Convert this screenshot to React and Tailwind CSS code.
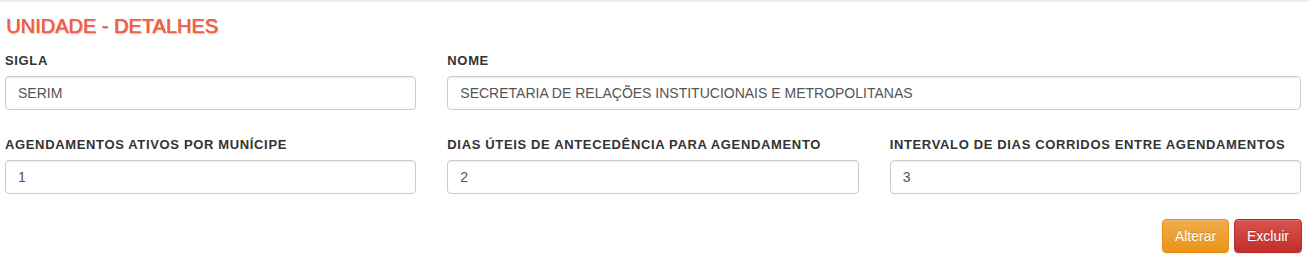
const campos = [
  { label: "SIGLA", value: "SERIM", span: "" },
  { label: "NOME", value: "SECRETARIA DE RELAÇÕES INSTITUCIONAIS E METROPOLITANAS", span: "col-span-2" },
  { label: "AGENDAMENTOS ATIVOS POR MUNÍCIPE", value: "1", span: "" },
  { label: "DIAS ÚTEIS DE ANTECEDÊNCIA PARA AGENDAMENTO", value: "2", span: "" },
  { label: "INTERVALO DE DIAS CORRIDOS ENTRE AGENDAMENTOS", value: "3", span: "" },
];

const Campo = ({ label, value, span }) => (
  <div className={span}>
    <label className="block text-[13px] font-bold leading-[17px] tracking-[0.65px] text-[#333] mb-[7px] whitespace-nowrap">
      {label}
    </label>
    <input
      readOnly
      value={value}
      className="block w-full h-[34px] px-3 text-[14px] text-[#555] bg-white border border-[#ccc] rounded-[4px] shadow-[inset_0_1px_1px_rgba(0,0,0,0.075)] outline-none"
    />
  </div>
);

const App = () => {
  return (
    <div className="w-[1309px] h-[269px] bg-white border-t-2 border-[#ececec] font-['Liberation_Sans',Arial,sans-serif]">
      <h3 className="mt-[13px] pl-[6px] text-[20px] leading-[22px] text-[#f0604a] [text-shadow:0.6px_0.4px_0_#ec5a42,1px_1px_1px_rgba(120,30,10,0.3)]">
        UNIDADE - DETALHES
      </h3>

      <div className="mt-[15px] pl-[5px] pr-[8px] grid grid-cols-3 gap-x-[31px] gap-y-[26px]">
        {campos.map((campo, i) => (
          <Campo key={i} {...campo} />
        ))}
      </div>

      <div className="mt-[25px] pr-[7px] flex justify-end gap-[5px]">
        <button className="h-[34px] w-[67px] text-[14px] text-white rounded-[4px] border border-[#e38d13] bg-[linear-gradient(#f0ad4e,#eb9316)] [text-shadow:0_-1px_0_rgba(0,0,0,0.2)] shadow-[inset_0_1px_0_rgba(255,255,255,0.15),0_1px_1px_rgba(0,0,0,0.075)]">
          Alterar
        </button>
        <button className="h-[34px] w-[68px] text-[14px] text-white rounded-[4px] border border-[#b92c28] bg-[linear-gradient(#d9534f,#c12e2a)] [text-shadow:0_-1px_0_rgba(0,0,0,0.2)] shadow-[inset_0_1px_0_rgba(255,255,255,0.15),0_1px_1px_rgba(0,0,0,0.075)]">
          Excluir
        </button>
      </div>
    </div>
  );
};

export default App;
